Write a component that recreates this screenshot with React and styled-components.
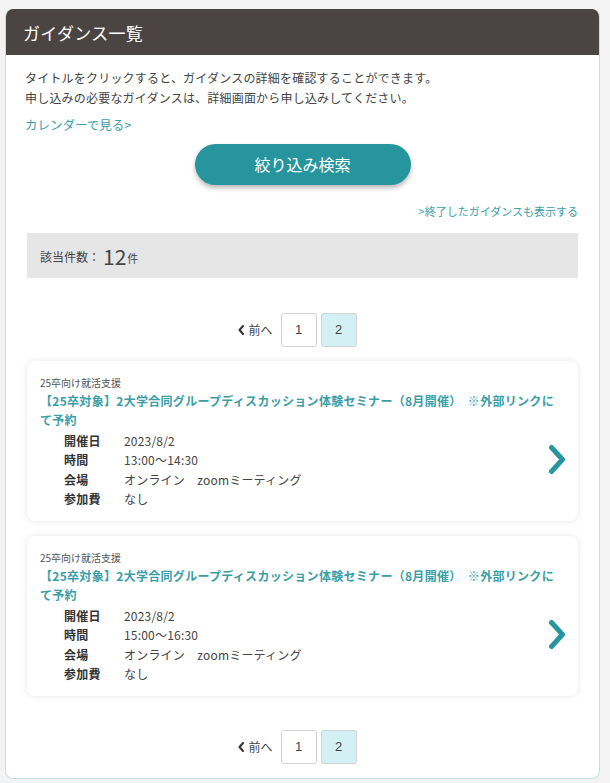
import React from "react";
import styled, { createGlobalStyle } from "styled-components";

const GlobalStyle = createGlobalStyle`
  html, body {
    margin: 0;
    padding: 0;
    background: #f3f3f3;
  }
  body {
    font-family: "Noto Sans CJK JP", "Noto Sans", sans-serif;
    color: #444;
  }
`;

const colours = {
  teal: "#27959d",
  link: "#3a9ea6",
  text: "#444444",
  header: "#4a4542",
  border: "#bfe2e2",
};

const Page = styled.div`
  padding: 9px 10px 5px 5px;
`;

const Panel = styled.div`
  background: #fff;
  border-radius: 8px;
  border: 1px solid ${colours.border};
  border-top: none;
  overflow: hidden;
`;

const PanelHeader = styled.div`
  height: 46px;
  display: flex;
  align-items: center;
  padding: 0 18px;
  margin: 0 -1px;
  background: ${colours.header};
  color: #fff;
  font-size: 17px;
  letter-spacing: 0.3px;
`;

const PanelBody = styled.div`
  padding: 13px 21px 14px;
  display: flex;
  flex-direction: column;
`;

const Intro = styled.p`
  margin: 0 -2px;
  font-size: 12px;
  line-height: 19.5px;
  color: ${colours.text};
  letter-spacing: 0.2px;
`;

const TextLink = styled.a`
  display: block;
  margin: ${(p) => p.$margin || "0"};
  font-size: ${(p) => p.$size || "12px"};
  line-height: ${(p) => p.$lh || "19.5px"};
  color: ${colours.link};
  text-decoration: none;
  text-align: ${(p) => (p.$right ? "right" : "left")};
  cursor: pointer;
`;

const SearchButton = styled.button`
  align-self: center;
  width: 216px;
  height: 41px;
  margin-top: 9px;
  border: none;
  border-radius: 21px;
  background: ${colours.teal};
  color: #fff;
  font-family: inherit;
  font-size: 16px;
  box-shadow: 0 3px 5px rgba(0, 0, 0, 0.28);
  cursor: pointer;
`;

const CountBar = styled.div`
  margin-top: 13px;
  height: 43px;
  background: #e6e6e6;
  display: flex;
  align-items: center;
  padding: 2px 13px 0;
  color: ${colours.text};
  font-size: 12px;
`;

const CountNumber = styled.span`
  font-size: 21px;
  margin: 0 1px 0 3px;
  line-height: 1;
`;

const CountUnit = styled.span`
  font-size: 11px;
  margin-top: 4px;
`;

const Pager = styled.div`
  margin-top: ${(p) => p.$top};
  display: flex;
  justify-content: center;
  align-items: center;
  gap: 4px;
  padding-right: 10px;
`;

const PrevLink = styled.a`
  display: flex;
  align-items: center;
  gap: 4px;
  margin-right: 4px;
  font-size: 12px;
  color: ${colours.text};
  cursor: pointer;
`;

const PageBox = styled.span`
  width: 34px;
  height: 32px;
  display: flex;
  align-items: center;
  justify-content: center;
  border: 1px solid #d2d2d2;
  border-radius: 3px;
  background: ${(p) => (p.$active ? "#d3f1f5" : "#fff")};
  font-family: "Liberation Sans", Arial, sans-serif;
  font-size: 13px;
  color: #444;
`;

const CardList = styled.div`
  margin-top: 14px;
  display: flex;
  flex-direction: column;
  gap: 15px;
`;

const Card = styled.div`
  background: #fff;
  border-radius: 8px;
  box-shadow: 0 0 6px rgba(0, 0, 0, 0.1);
  padding: 14px 12px 12px 13px;
`;

const Category = styled.div`
  font-size: 10px;
  line-height: 16px;
  color: #555;
`;

const Title = styled.a`
  display: block;
  max-width: 516px;
  font-size: 12px;
  line-height: 19px;
  font-weight: bold;
  color: ${colours.link};
  letter-spacing: 0.3px;
  text-decoration: none;
  cursor: pointer;
`;

const DetailRow = styled.div`
  display: flex;
  align-items: flex-start;
  margin-top: 2px;
`;

const Details = styled.dl`
  flex: 1;
  margin: 0 0 0 24px;
  display: grid;
  grid-template-columns: 60px 1fr;
  font-size: 12px;
  line-height: 19.5px;
  color: ${colours.text};
  letter-spacing: 0.2px;
  dt {
    font-weight: bold;
    color: #333;
  }
  dd {
    margin: 0;
  }
`;

const Arrow = styled.svg`
  flex: none;
  margin-top: 13px;
  width: 18px;
  height: 31px;
`;

const PrevIcon = () => (
  <svg width="6" height="10" viewBox="0 0 6 10">
    <polyline
      points="5,1 1.5,5 5,9"
      fill="none"
      stroke="#333"
      strokeWidth="2"
      strokeLinecap="round"
      strokeLinejoin="round"
    />
  </svg>
);

const Pagination = ({ top }) => (
  <Pager $top={top}>
    <PrevLink>
      <PrevIcon />
      前へ
    </PrevLink>
    <PageBox>1</PageBox>
    <PageBox $active>2</PageBox>
  </Pager>
);

const guidances = [
  { date: "2023/8/2", time: "13:00〜14:30" },
  { date: "2023/8/2", time: "15:00〜16:30" },
];

const GuidanceCard = ({ item }) => (
  <Card>
    <Category>25卒向け就活支援</Category>
    <Title>
      【25卒対象】2大学合同グループディスカッション体験セミナー（8月開催）　※外部リンクにて予約
    </Title>
    <DetailRow>
      <Details>
        <dt>開催日</dt>
        <dd>{item.date}</dd>
        <dt>時間</dt>
        <dd>{item.time}</dd>
        <dt>会場</dt>
        <dd>オンライン　zoomミーティング</dd>
        <dt>参加費</dt>
        <dd>なし</dd>
      </Details>
      <Arrow viewBox="0 0 18 31">
        <polyline
          points="3.5,3.5 14.5,15.5 3.5,27.5"
          fill="none"
          stroke={colours.teal}
          strokeWidth="5"
          strokeLinecap="round"
          strokeLinejoin="round"
        />
      </Arrow>
    </DetailRow>
  </Card>
);

export default function App() {
  return (
    <>
      <GlobalStyle />
      <Page>
        <Panel>
          <PanelHeader>ガイダンス一覧</PanelHeader>
          <PanelBody>
            <Intro>
              タイトルをクリックすると、ガイダンスの詳細を確認することができます。
              <br />
              申し込みの必要なガイダンスは、詳細画面から申し込みしてください。
            </Intro>
            <TextLink $margin="8px -2px 0" $size="12.5px">
              カレンダーで見る&gt;
            </TextLink>
            <SearchButton>絞り込み検索</SearchButton>
            <TextLink $margin="17px 0 0" $size="11px" $lh="18px" $right>
              &gt;終了したガイダンスも表示する
            </TextLink>
            <CountBar>
              該当件数：<CountNumber>12</CountNumber>
              <CountUnit>件</CountUnit>
            </CountBar>
            <Pagination top="35px" />
            <CardList>
              {guidances.map((g, i) => (
                <GuidanceCard key={i} item={g} />
              ))}
            </CardList>
            <Pagination top="34px" />
          </PanelBody>
        </Panel>
      </Page>
    </>
  );
}
